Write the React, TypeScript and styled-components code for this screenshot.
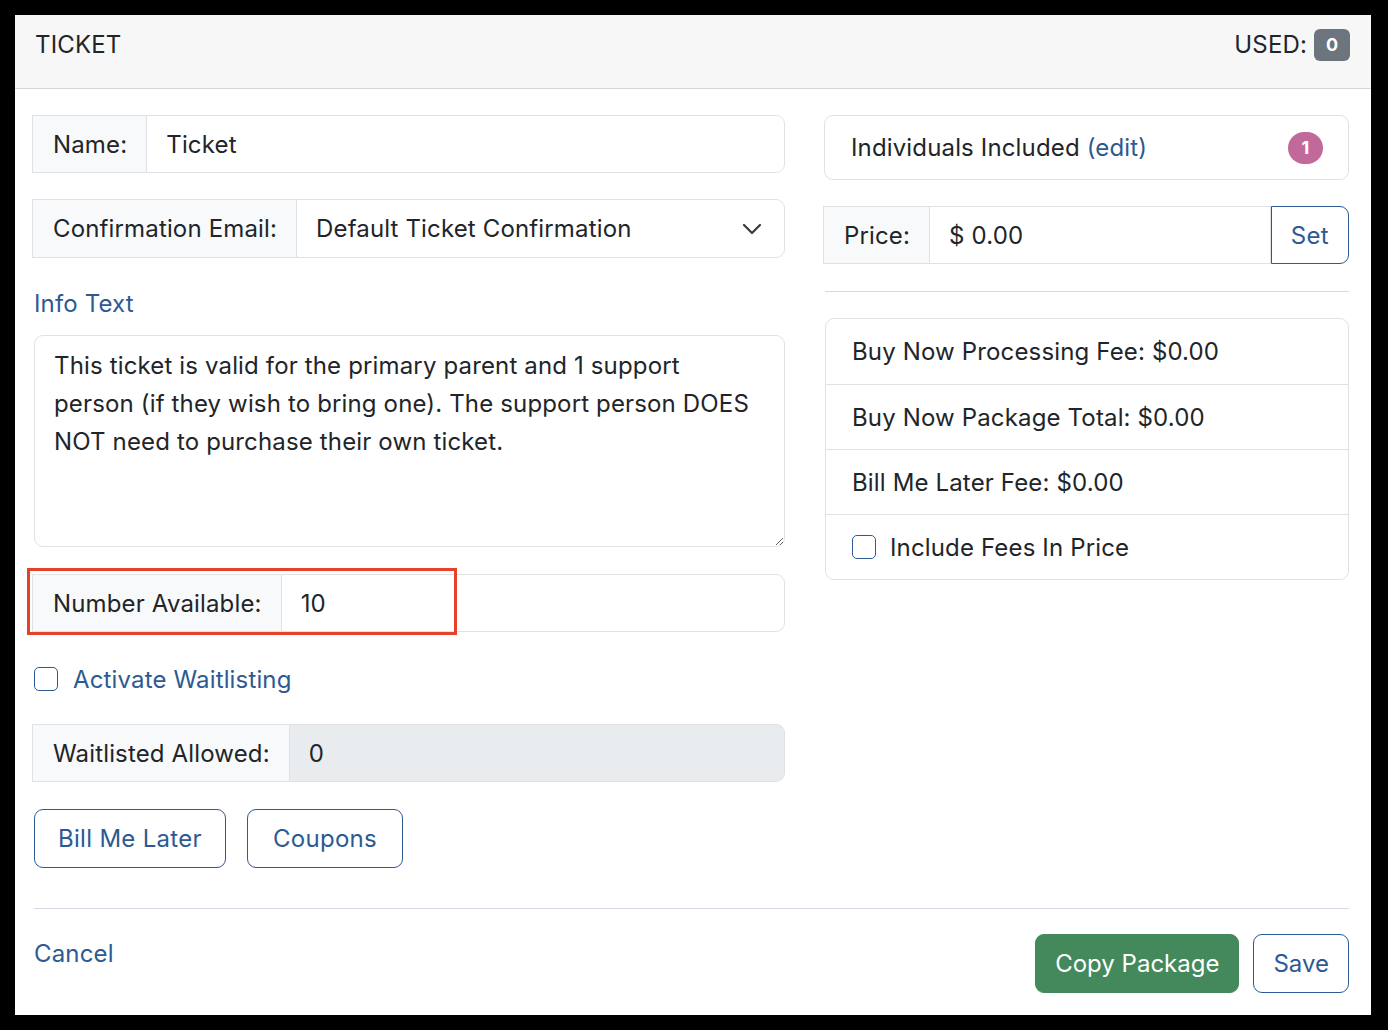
import React from 'react';
import styled, { createGlobalStyle } from 'styled-components';

const colors = {
  text: '#212529',
  link: '#2d5a92',
  border: '#dee2e6',
  addon: '#f8f9fa',
  disabled: '#e9ecef',
  header: '#f7f7f7',
  green: '#43895c',
  pink: '#c1699a',
  grey: '#6c757d',
  highlight: '#e5412b',
};

const GlobalStyle = createGlobalStyle`
  * { box-sizing: border-box; }
  body {
    margin: 0;
    background: #000;
    font-family: Inter, 'Helvetica Neue', Arial, sans-serif;
    letter-spacing: 0.15px;
    color: ${colors.text};
  }
`;

const Frame = styled.div`
  padding: 15px 17px 15px 15px;
  background: #000;
`;

const Card = styled.div`
  background: #fff;
  height: 1000px;
  display: flex;
  flex-direction: column;
`;

const Header = styled.div`
  height: 74px;
  display: flex;
  align-items: flex-start;
  justify-content: space-between;
  padding: 14px 21px 0 20px;
  background: ${colors.header};
  border-bottom: 1px solid #d6d6d6;
  font-size: 24px;
  line-height: 32px;
`;

const UsedLabel = styled.div`
  display: flex;
  align-items: center;
  gap: 7px;
`;

const CountBadge = styled.span<{ $bg: string; $round?: boolean }>`
  display: inline-flex;
  align-items: center;
  justify-content: center;
  min-width: ${(p) => (p.$round ? '35px' : '36px')};
  height: 32px;
  padding: 0 8px;
  border-radius: ${(p) => (p.$round ? '16px' : '6px')};
  background: ${(p) => p.$bg};
  color: #fff;
  font-size: 18px;
  font-weight: 700;
  letter-spacing: 0;
`;

const Body = styled.div`
  padding: 26px 22px 0 17px;
  display: grid;
  grid-template-columns: 753px 1fr;
  column-gap: 38px;
`;

const Column = styled.div`
  display: flex;
  flex-direction: column;
`;

const InputGroup = styled.div<{ $mb?: number; $h?: number }>`
  display: flex;
  height: ${(p) => p.$h ?? 58}px;
  margin-bottom: ${(p) => p.$mb ?? 26}px;
  font-size: 24px;
`;

const Addon = styled.div`
  display: flex;
  align-items: center;
  padding: 0 19px 0 20px;
  background: ${colors.addon};
  border: 1px solid ${colors.border};
  border-right: none;
  white-space: nowrap;
`;

const Field = styled.div<{ $disabled?: boolean; $rounded?: boolean }>`
  flex: 1;
  display: flex;
  align-items: center;
  padding: 0 19px;
  border: 1px solid ${colors.border};
  border-radius: ${(p) => (p.$rounded ? '0 9px 9px 0' : '0')};
  background: ${(p) => (p.$disabled ? colors.disabled : '#fff')};
`;

const SelectField = styled(Field)`
  justify-content: space-between;
  padding-right: 22px;
`;

const SectionLink = styled.a`
  color: ${colors.link};
  font-size: 24px;
  line-height: 38px;
  margin: 0 0 12px 2px;
  text-decoration: none;
`;

const TextArea = styled.textarea`
  height: 212px;
  margin: 0 0 27px 2px;
  padding: 11px 25px 10px 19px;
  border: 1px solid ${colors.border};
  border-radius: 9px;
  font-family: inherit;
  font-size: 24px;
  line-height: 38px;
  letter-spacing: 0.15px;
  color: ${colors.text};
  resize: vertical;
  outline: none;
`;

const Highlighted = styled.div`
  position: relative;
`;

const HighlightFrame = styled.div`
  position: absolute;
  left: -5px;
  top: -6px;
  width: 430px;
  height: 67px;
  border: 3px solid ${colors.highlight};
  pointer-events: none;
`;

const CheckRow = styled.label<{ $link?: boolean }>`
  display: flex;
  align-items: center;
  gap: 15px;
  height: 38px;
  margin: 1px 0 26px 2px;
  font-size: 24px;
  color: ${(p) => (p.$link ? colors.link : colors.text)};
`;

const Box = styled.span`
  width: 24px;
  height: 24px;
  border: 1px solid ${colors.link};
  border-radius: 5px;
  background: #fff;
  flex-shrink: 0;
`;

const ButtonRow = styled.div`
  display: flex;
  gap: 21px;
  margin-left: 2px;
`;

const OutlineButton = styled.button<{ $px?: number; $ls?: number }>`
  height: 59px;
  padding: 0 ${(p) => p.$px ?? 21}px;
  border: 1px solid ${colors.link};
  border-radius: 9px;
  background: #fff;
  color: ${colors.link};
  font-family: inherit;
  font-size: 24px;
  letter-spacing: ${(p) => p.$ls ?? 0.3}px;
`;

const SolidButton = styled(OutlineButton)`
  background: ${colors.green};
  border-color: ${colors.green};
  color: #fff;
`;

const SetButton = styled(OutlineButton)`
  height: 58px;
  padding: 0 19px;
  border-radius: 0 9px 9px 0;
`;

const Panel = styled.div`
  border: 1px solid ${colors.border};
  border-radius: 9px;
`;

const IncludedPanel = styled(Panel)`
  height: 65px;
  display: flex;
  align-items: center;
  justify-content: space-between;
  padding: 0 25px 0 26px;
  margin: 0 0 26px 1px;
  font-size: 24px;
`;

const Edit = styled.a`
  color: ${colors.link};
  text-decoration: none;
`;

const Divider = styled.hr<{ $mt: number; $mb: number; $ml?: number }>`
  border: none;
  border-top: 1px solid #d3d9e0;
  margin: ${(p) => p.$mt}px 0 ${(p) => p.$mb}px ${(p) => p.$ml ?? 2}px;
`;

const FeeList = styled(Panel)`
  margin-left: 2px;
`;

const FeeItem = styled.div`
  height: 65px;
  display: flex;
  align-items: center;
  gap: 14px;
  padding: 0 26px;
  font-size: 24px;
  & + & {
    border-top: 1px solid ${colors.border};
  }
`;

const Footer = styled.div`
  margin: 0 22px 0 19px;
`;

const FooterRow = styled.div`
  display: flex;
  align-items: center;
  justify-content: space-between;
`;

const FooterActions = styled.div`
  display: flex;
  gap: 14px;
`;

const CancelLink = styled.a`
  color: ${colors.link};
  font-size: 24px;
  margin-top: -20px;
  text-decoration: none;
`;

function Chevron() {
  return (
    <svg width="20" height="12" viewBox="0 0 20 12" fill="none">
      <path d="M2 2l8 8 8-8" stroke="#343a40" strokeWidth="2.2" strokeLinecap="round" strokeLinejoin="round" />
    </svg>
  );
}

const infoText =
  'This ticket is valid for the primary parent and 1 support person (if they wish to bring one). The support person DOES NOT need to purchase their own ticket.';

export default function App() {
  return (
    <>
      <GlobalStyle />
      <Frame>
        <Card>
          <Header>
            <span>TICKET</span>
            <UsedLabel>
              USED: <CountBadge $bg={colors.grey}>0</CountBadge>
            </UsedLabel>
          </Header>

          <Body>
            <Column>
              <InputGroup>
                <Addon>Name:</Addon>
                <Field $rounded>Ticket</Field>
              </InputGroup>

              <InputGroup $mb={27} $h={59}>
                <Addon>Confirmation Email:</Addon>
                <SelectField $rounded>
                  Default Ticket Confirmation
                  <Chevron />
                </SelectField>
              </InputGroup>

              <SectionLink>Info Text</SectionLink>
              <TextArea defaultValue={infoText} />

              <Highlighted>
                <InputGroup $mb={27}>
                  <Addon>Number Available:</Addon>
                  <Field $rounded>10</Field>
                </InputGroup>
                <HighlightFrame />
              </Highlighted>

              <CheckRow $link>
                <Box />
                Activate Waitlisting
              </CheckRow>

              <InputGroup $mb={27}>
                <Addon>Waitlisted Allowed:</Addon>
                <Field $rounded $disabled>0</Field>
              </InputGroup>

              <ButtonRow>
                <OutlineButton $px={23}>Bill Me Later</OutlineButton>
                <OutlineButton $px={25}>Coupons</OutlineButton>
              </ButtonRow>
            </Column>

            <Column>
              <IncludedPanel>
                <span>
                  Individuals Included <Edit>(edit)</Edit>
                </span>
                <CountBadge $bg={colors.pink} $round>1</CountBadge>
              </IncludedPanel>

              <InputGroup $mb={0}>
                <Addon>Price:</Addon>
                <Field>$ 0.00</Field>
                <SetButton>Set</SetButton>
              </InputGroup>

              <Divider $mt={27} $mb={26} />

              <FeeList>
                <FeeItem>Buy Now Processing Fee: $0.00</FeeItem>
                <FeeItem>Buy Now Package Total: $0.00</FeeItem>
                <FeeItem>Bill Me Later Fee: $0.00</FeeItem>
                <FeeItem>
                  <Box />
                  Include Fees In Price
                </FeeItem>
              </FeeList>
            </Column>
          </Body>

          <Footer>
            <Divider $mt={40} $mb={25} $ml={0} />
            <FooterRow>
              <CancelLink>Cancel</CancelLink>
              <FooterActions>
                <SolidButton $px={19} $ls={0}>Copy Package</SolidButton>
                <OutlineButton $px={19} $ls={0}>Save</OutlineButton>
              </FooterActions>
            </FooterRow>
          </Footer>
        </Card>
      </Frame>
    </>
  );
}
